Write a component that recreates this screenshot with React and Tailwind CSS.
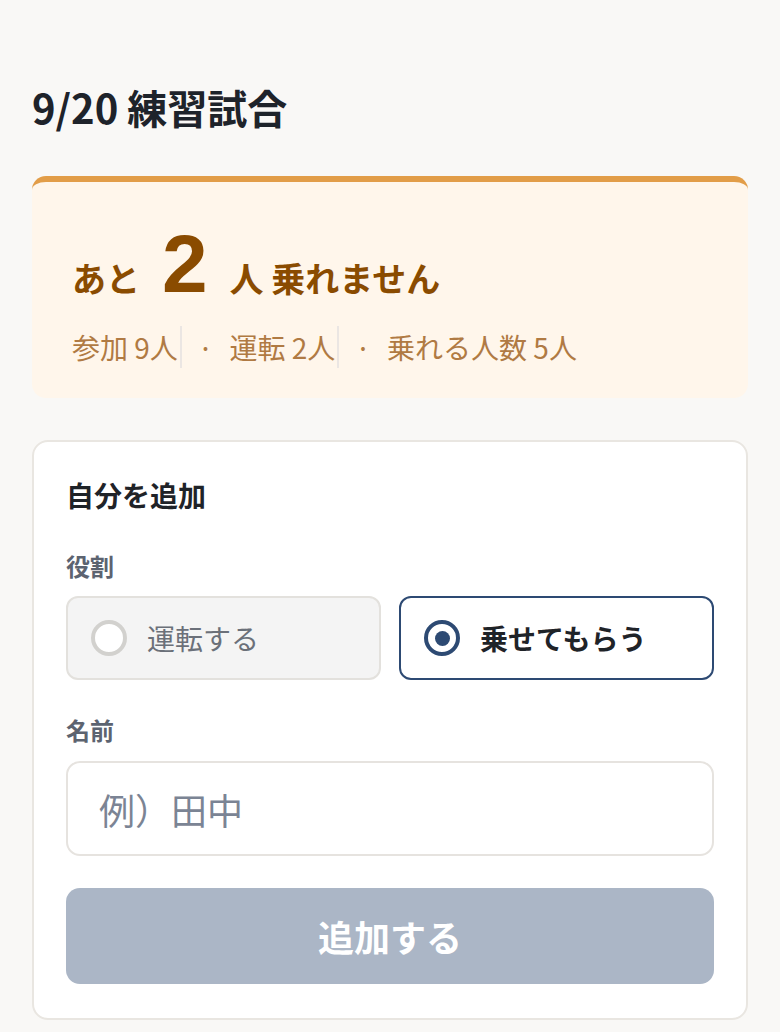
import React from "react";

export default function App() {
  return (
    <div className="min-h-screen bg-[#f9f8f6] px-8 pt-[77px] pb-8 font-['Noto_Sans_CJK_JP','Noto_Sans',sans-serif]">
      <h1 className="text-[40px] font-bold leading-[60px] text-[#1e232a]">9/20 練習試合</h1>

      <div className="mt-[39px] rounded-[14px] border-t-[6px] border-[#e29d48] bg-[#fff6eb] px-10 pt-[41px] pb-[30px]">
        <div className="flex items-baseline leading-none text-[34px] font-bold text-[#8a4b00]">
          <span>あと</span>
          <span className="mx-[22px] font-['Liberation_Sans',sans-serif] text-[82px] font-bold leading-none">2</span>
          <span>人 乗れません</span>
        </div>
        <div className="mt-[21px] flex items-center text-[28px] leading-[42px] text-[#b07a43]">
          <span className="border-r-2 border-[#ebe6e3] pr-[2px]">参加&nbsp;9人</span>
          <span className="px-[16px]">·</span>
          <span className="border-r-2 border-[#ebe6e3] pr-[2px]">運転&nbsp;2人</span>
          <span className="px-[16px]">·</span>
          <span>乗れる人数&nbsp;5人</span>
        </div>
      </div>

      <div className="mt-[42px] rounded-[16px] border-2 border-[#e9e6e1] bg-white px-8 pt-8 pb-[34px]">
        <h2 className="text-[28px] font-bold leading-[42px] text-[#1f2328]">自分を追加</h2>

        <div className="mt-8 text-[24px] font-semibold leading-[36px] text-[#5c6370]">役割</div>
        <div className="mt-3 grid grid-cols-2 gap-[18px]">
          <div className="flex h-[84px] items-center gap-5 rounded-[12px] border-2 border-[#e3e1dd] bg-[#f4f4f4] pl-[23px]">
            <span className="h-[36px] w-[36px] rounded-full border-[4px] border-[#d2d1ce] bg-white" />
            <span className="text-[28px] text-[#6b7079]">運転する</span>
          </div>
          <div className="flex h-[84px] items-center gap-5 rounded-[12px] border-2 border-[#2d4a73] bg-white pl-[23px]">
            <span className="flex h-[36px] w-[36px] items-center justify-center rounded-full border-[4px] border-[#2d4a73] bg-white">
              <span className="h-[15px] w-[15px] rounded-full bg-[#2d4a73]" />
            </span>
            <span className="text-[28px] font-bold text-[#1f2328]">乗せてもらう</span>
          </div>
        </div>

        <div className="mt-8 text-[24px] font-semibold leading-[36px] text-[#5c6370]">名前</div>
        <input
          className="mt-[13px] block h-[95px] w-full rounded-[14px] border-2 border-[#e6e3df] bg-white px-[31px] text-[36px] text-[#1f2328] outline-none placeholder:text-[#7b8494]"
          placeholder="例）田中"
        />

        <button className="mt-8 flex h-[96px] w-full items-center justify-center rounded-[14px] bg-[#abb6c6] text-[36px] font-bold text-white">
          追加する
        </button>
      </div>
    </div>
  );
}
